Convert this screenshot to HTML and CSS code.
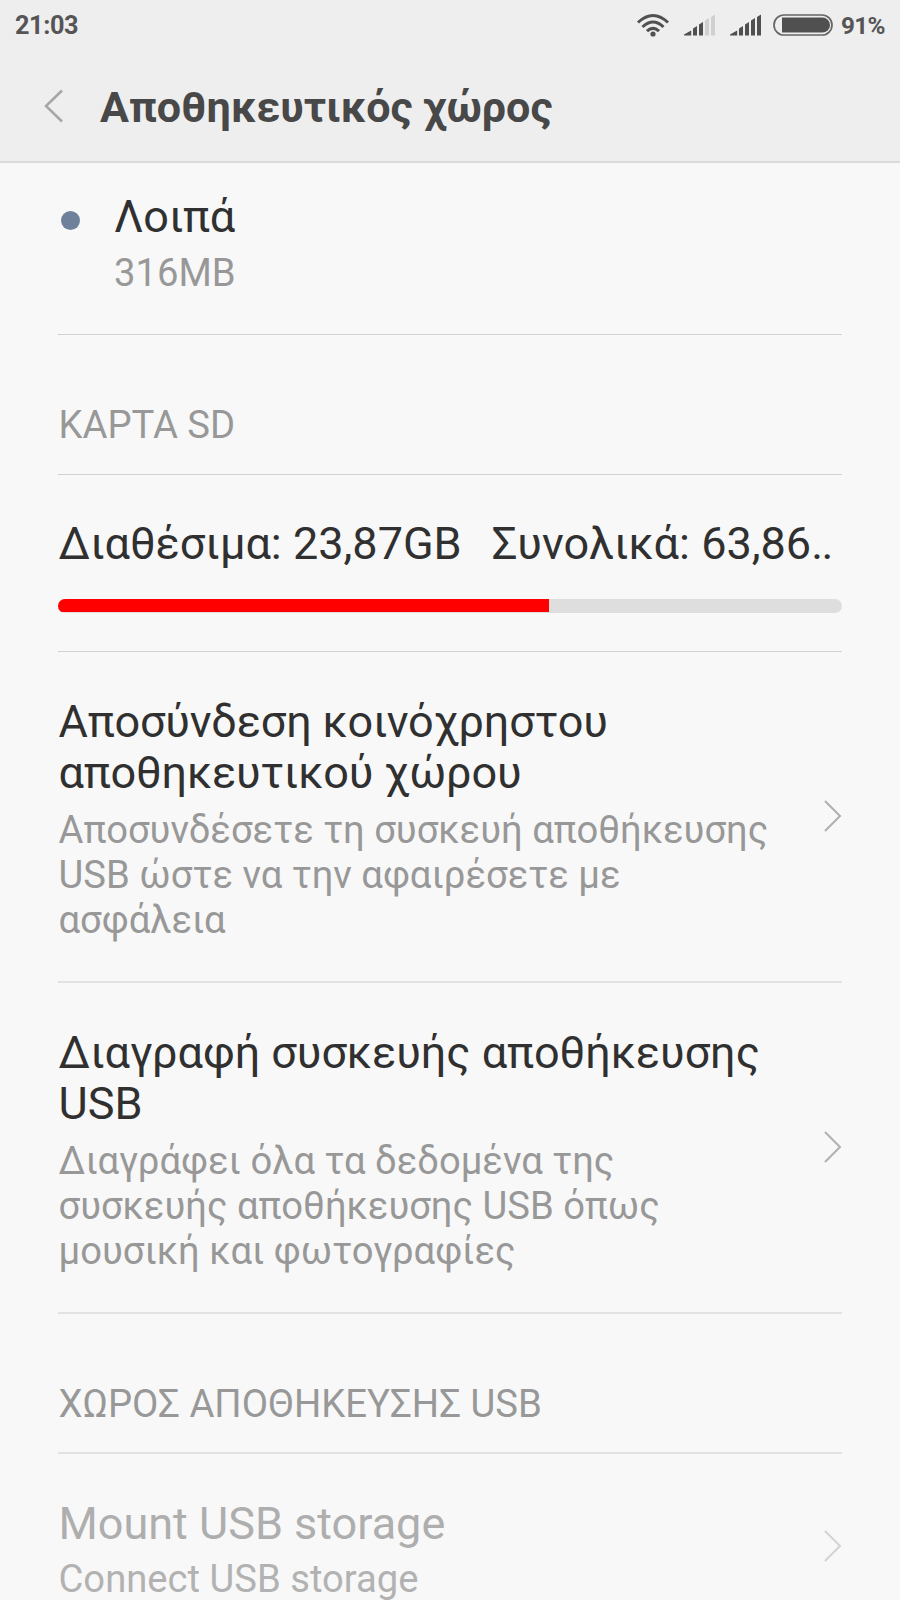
FILE: index.html
```html
<!DOCTYPE html>
<html lang="el"><head><meta charset="utf-8"><title>Αποθηκευτικός χώρος</title><link rel="stylesheet" href="styles.css"></head>
<body>
<header class="top">
<div class="status"><span class="clock">21:03</span>
<svg class="wifi" width="34" height="24" viewBox="0 0 34 24" fill="none" stroke="#505050" stroke-width="3"><path d="M2 9.500Q17-4.500 32 9.500M6.500 14Q17 4 27.500 14M11 18.200Q17 12.500 23 18.200"/><circle cx="17" cy="21" r="2.600" fill="#505050" stroke="none"/></svg>
<svg class="sig1" width="31" height="22" viewBox="0 0 31 22" fill="#505050"><path d="M0 21.500V20.500L7.200 16.500V21.500ZM9 21.500V14.500L13 12V21.500ZM15 21.500V10.500L19 8V21.500Z"/><path fill="#d0d0d0" d="M21 21.500V6.500L25 4V21.500ZM27 21.500V3L31 .5V21.500Z"/></svg>
<svg class="sig2" width="31" height="22" viewBox="0 0 31 22" fill="#505050"><path d="M0 21.500V20.500L7.200 16.500V21.500ZM9 21.500V14.500L13 12V21.500ZM15 21.500V10.500L19 8V21.500ZM21 21.500V6.500L25 4V21.500ZM27 21.500V3L31 .5V21.500Z"/></svg>
<svg class="battery" width="60" height="22" viewBox="0 0 60 22"><rect x="1" y="1" width="58" height="20" rx="10" fill="none" stroke="#666" stroke-width="1.700"/><path d="M9 3.500H49.500A7.500 7.500 0 0 1 49.500 18.500H9Z" fill="#505050"/></svg>
<span class="percent">91%</span></div>
<div class="titlebar"><svg class="back" width="20" height="34" viewBox="0 0 20 34" fill="none" stroke="#a6a6a6" stroke-width="2.500"><path d="M18 1.500L2 17L18 32.500"/></svg><h1>Αποθηκευτικός χώρος</h1></div>
</header>
<main>
<section class="misc"><i class="dot"></i><div><div class="name">Λοιπά</div><div class="sub">316MB</div></div></section>
<h2 class="section">ΚΑΡΤΑ SD</h2>
<section class="usage"><div class="figures"><span>Διαθέσιμα: 23,87GB</span><span>Συνολικά: 63,86<span class="dots">..</span></span></div><div class="bar"><div class="used"></div></div></section>
<section class="item"><div class="text"><div class="name"><span class="tight">Αποσύνδεση κοινόχρηστου<br>αποθηκευτικού χώρου</span></div><div class="sub">Αποσυνδέσετε τη συσκευή αποθήκευσης<br>USB ώστε να την αφαιρέσετε με<br>ασφάλεια</div></div><svg class="next" width="18" height="32" viewBox="0 0 18 32"><path d="M1 1L16 16L1 31"/></svg></section>
<section class="item"><div class="text"><div class="name">Διαγραφή συσκευής αποθήκευσης<br>USB</div><div class="sub">Διαγράφει όλα τα δεδομένα της<br>συσκευής αποθήκευσης USB όπως<br>μουσική και φωτογραφίες</div></div><svg class="next" width="18" height="32" viewBox="0 0 18 32"><path d="M1 1L16 16L1 31"/></svg></section>
<h2 class="section usb">ΧΩΡΟΣ ΑΠΟΘΗΚΕΥΣΗΣ USB</h2>
<section class="item disabled"><div class="text"><div class="name">Mount USB storage</div><div class="sub">Connect USB storage</div></div><svg class="next" width="18" height="32" viewBox="0 0 18 32"><path d="M1 1L16 16L1 31"/></svg></section>
</main></body></html>
```
FILE: styles.css
```css
*{box-sizing:border-box}
body{margin:0;height:1600px;overflow:hidden;background:#f8f8f8;font-family:Roboto,"Noto Sans",sans-serif;color:#303030}
.top{height:163px;background:#eee;border-bottom:2px solid #dadada}
.status{display:flex;height:50px;align-items:center;padding:0 15px;font-weight:700;color:#555;white-space:nowrap}
.clock{margin-right:auto;font-size:25.3px;letter-spacing:-.4px}
.wifi{margin-right:14px}
.sig1{margin-right:15px}
.sig2{margin-right:12px}
.battery{margin-right:8px}
.percent{width:44px;font-size:24.3px;letter-spacing:-.7px}
.titlebar{display:flex;align-items:center;height:112px;padding-left:44px}
.back{margin-right:36px}
h1{margin:0;padding-top:4px;font-size:43.1px;line-height:54px;font-weight:700;color:#484848;white-space:nowrap}
main{padding:0 58px}
section,.section{border-bottom:1px solid #d2d2d2}
.name,.figures{font-size:45px;line-height:51px;white-space:nowrap}
.tight{letter-spacing:-.12px}
.sub{font-size:38.2px;line-height:45px;color:#989898;white-space:nowrap;margin-top:9px}
.misc{display:flex;height:172px;padding:28px 0 0 3px}
.dot{width:19px;height:19px;border-radius:50%;background:#6f809a;margin:20px 34px 0 0}
.section{height:140px;margin:0;padding:68px 0 0 .5px;font-size:38.25px;line-height:45px;font-weight:400;color:#989898}
.usage{height:177px;padding-top:43px}
.figures{display:flex;gap:30px;padding-left:.5px}
.dots{letter-spacing:-1.5px}
.bar{height:14px;margin-top:30px;border-radius:7px;background:#dedede;overflow:hidden}
.used{width:490.500px;height:13px;background:red}
.item{display:flex;justify-content:space-between;align-items:center;height:331px;border-bottom:2px solid #e2e2e2}
.item .text{padding:5px 0 0 .5px}
.item .sub{margin-top:10px}
.usb{padding-top:68px;border-bottom:2px solid #e2e2e2}
.next{fill:none;stroke:#b0b0b0;stroke-width:2;margin-bottom:1px}
.disabled{height:187px;color:#aeaeae}
.disabled .text{padding-top:7px}
.disabled .sub{margin-top:8px;color:#b2b2b2}
.disabled .next{opacity:.5}
```
